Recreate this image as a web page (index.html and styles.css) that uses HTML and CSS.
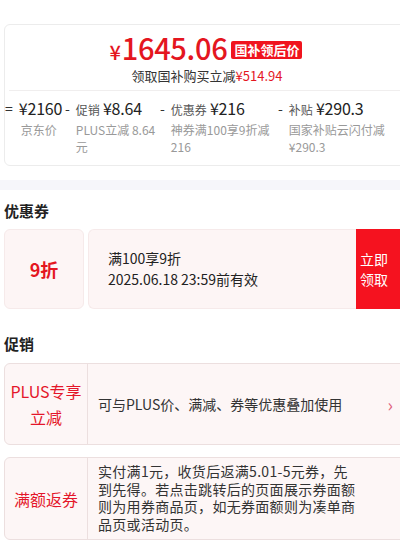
FILE: index.html
```html
<!DOCTYPE html>
<html lang="zh-CN">
<head>
  <meta charset="UTF-8" />
  <meta name="viewport" content="width=device-width, initial-scale=1" />
  <title>价格详情</title>
  <link rel="stylesheet" href="styles.css">
</head>
<body>

<div class="page">

  <!-- Price summary -->
  <div class="price-card">
    <div class="price-head">
      <div class="final-line">
        <span class="final-price"><span class="yen">¥</span>1645.06</span>
        <span class="tag">国补领后价</span>
      </div>
      <div class="save-line">领取国补购买立减<span class="red">¥514.94</span></div>
    </div>

    <div class="calc">
      <div class="calc-col">
        <span class="sign">=</span>
        <div class="calc-body">
          <div class="calc-top"><span class="amount">¥2160</span></div>
          <div class="calc-note">京东价</div>
        </div>
      </div>
      <div class="calc-col">
        <span class="sign">-</span>
        <div class="calc-body">
          <div class="calc-top"><span class="label">促销</span><span class="amount">¥8.64</span></div>
          <div class="calc-note">PLUS立减 8.64元</div>
        </div>
      </div>
      <div class="calc-col">
        <span class="sign">-</span>
        <div class="calc-body">
          <div class="calc-top"><span class="label">优惠券</span><span class="amount">¥216</span></div>
          <div class="calc-note">神券满100享9折减216</div>
        </div>
      </div>
      <div class="calc-col">
        <span class="sign">-</span>
        <div class="calc-body">
          <div class="calc-top"><span class="label">补贴</span><span class="amount">¥290.3</span></div>
          <div class="calc-note">国家补贴云闪付减¥290.3</div>
        </div>
      </div>
    </div>
  </div>

  <div class="band"></div>

  <!-- Coupons -->
  <h2 class="section-title">优惠券</h2>
  <div class="coupon">
    <div class="coupon-value">9折</div>
    <div class="coupon-info">
      <div>满100享9折</div>
      <div>2025.06.18 23:59前有效</div>
    </div>
    <div class="coupon-btn">立即<br>领取</div>
  </div>

  <!-- Promotions -->
  <h2 class="section-title promo-title">促销</h2>
  <div class="promo">
    <div class="promo-name">PLUS专享<br>立减</div>
    <div class="promo-desc">可与PLUS价、满减、券等优惠叠加使用</div>
    <span class="promo-arrow">›</span>
  </div>
  <div class="promo">
    <div class="promo-name">满额返券</div>
    <div class="promo-desc long">实付满1元，收货后返满5.01-5元券，先到先得。若点击跳转后的页面展示券面额则为用券商品页，如无券面额则为凑单商品页或活动页。</div>
  </div>

</div>

</body>
</html>
```

FILE: styles.css
```css
html {
  overflow: hidden;
}

body {
  margin: 0;
  background: #fff;
  color: #222;
  font-family: "Noto Sans CJK SC", "Noto Sans", sans-serif;
}

.page {
  padding: 24px 0 0 4px;
  margin-right: -10px;
}

.red {
  color: #e4161f;
}

/* Price summary card */
.price-card {
  border: 1px solid #ececec;
  border-radius: 6px;
}

.price-head {
  text-align: center;
  padding: 7px 0 5px;
  border-bottom: 1px solid #f0eeee;
  margin-left: 4px;
}

.final-line {
  display: flex;
  justify-content: center;
  align-items: center;
  gap: 4px;
  height: 34px;
  margin-left: -6px;
}

.final-price {
  color: #e4161f;
  font-size: 29px;
  line-height: 32px;
  font-weight: 500;
  letter-spacing: -0.3px;
}

.final-price .yen {
  font-size: 20px;
  margin-right: 1px;
}

.tag {
  background: #f0141e;
  color: #fff;
  font-size: 13px;
  font-weight: bold;
  line-height: 18px;
  padding: 0 3px;
  border-radius: 2px;
  margin-top: 2px;
}

.save-line {
  font-size: 13px;
  line-height: 18px;
  color: #333;
  margin: 1px 0 0 -4px;
}

.calc {
  display: grid;
  grid-template-columns: 60px 95px 118px 112px;
  padding: 5px 0 10px;
}

.calc-col {
  display: flex;
  gap: 6px;
}

.sign {
  font-size: 14px;
  line-height: 24px;
  color: #333;
}

.calc-top {
  display: flex;
  align-items: baseline;
  white-space: nowrap;
  height: 24px;
  line-height: 24px;
}

.label {
  font-size: 12px;
  color: #555;
  margin-right: 3px;
}

.amount {
  font-size: 16px;
  letter-spacing: -0.2px;
  color: #222;
}

.calc-note {
  font-size: 12px;
  line-height: 17px;
  color: #999;
  margin-top: 1px;
}

.calc-col:first-child .calc-note {
  padding-left: 2px;
}

.band {
  height: 10px;
  background: #f6f6fa;
  margin: 14px 0 0 -4px;
}

.section-title {
  font-size: 15px;
  font-weight: bold;
  color: #222;
  margin: 0;
  line-height: 20px;
  padding: 11px 0 8px;
}

.promo-title {
  padding: 25px 0 9px;
}

/* Coupon */
.coupon {
  display: flex;
  height: 80px;
  gap: 4px;
}

.coupon-value,
.coupon-info {
  background: #fdf5f5;
  border: 1px solid #f6eaea;
  border-radius: 6px;
}

.coupon-value {
  width: 78px;
  display: flex;
  justify-content: center;
  align-items: center;
  color: #e4161f;
  font-size: 18px;
  font-weight: bold;
}

.coupon-info {
  flex: 1;
  display: flex;
  flex-direction: column;
  justify-content: center;
  padding-left: 19px;
  font-size: 14px;
  line-height: 21px;
  color: #222;
  border-radius: 6px 0 0 6px;
  border-right: none;
}

.coupon-btn {
  width: 50px;
  margin-left: -4px;
  background: #f5121f;
  color: #fff;
  font-size: 14px;
  line-height: 20px;
  display: flex;
  align-items: center;
  padding-left: 4px;
}

/* Promotions */
.promo {
  display: flex;
  align-items: stretch;
  min-height: 80px;
  background: #fdf6f6;
  border: 1px solid #ecdfdf;
  border-radius: 6px;
  margin-bottom: 12px;
}

.promo-name {
  width: 82px;
  flex-shrink: 0;
  display: flex;
  align-items: center;
  justify-content: center;
  text-align: center;
  color: #e4162a;
  font-size: 16px;
  line-height: 26px;
  border-right: 1px solid #ecdfdf;
}

.promo-desc {
  flex: 1;
  display: flex;
  align-items: center;
  padding: 0 12px 0 10px;
  font-size: 14px;
  color: #333;
}

.promo-desc.long {
  display: block;
  align-self: center;
  line-height: 17.5px;
  letter-spacing: 0.3px;
  text-spacing-trim: space-all;
  padding: 5px 0 6px 10px;
  max-width: 258px;
}

.promo-arrow {
  align-self: center;
  color: #e0607a;
  font-size: 18px;
  margin-right: 16px;
}
```
